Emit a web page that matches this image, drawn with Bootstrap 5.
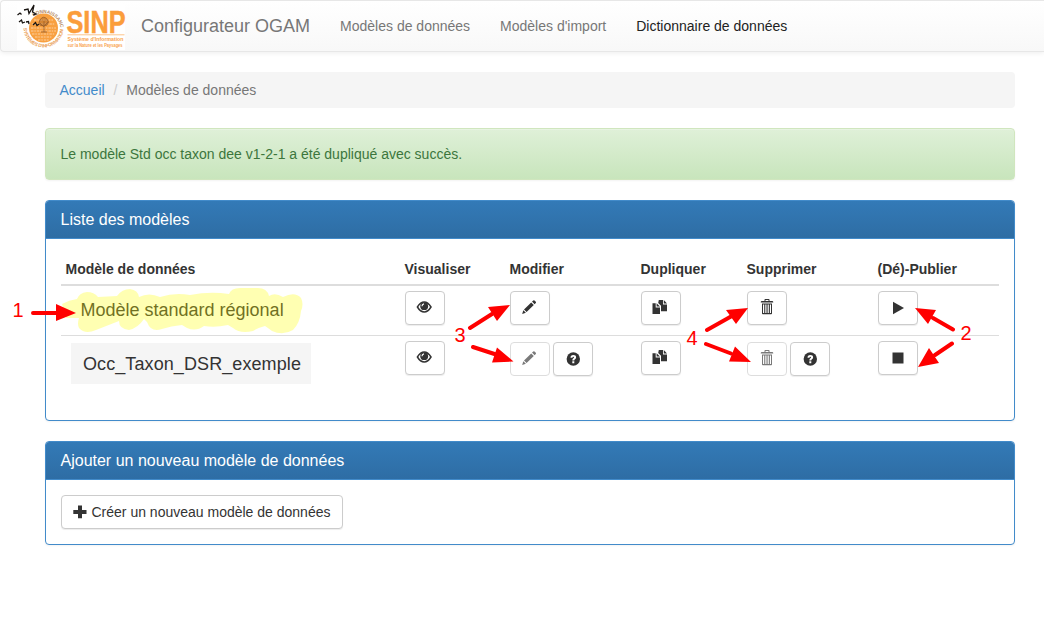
<!DOCTYPE html>
<html lang="fr">
<head>
<meta charset="utf-8">
<title>Configurateur OGAM</title>
<link href="https://cdn.jsdelivr.net/npm/bootstrap@5.3.0/dist/css/bootstrap.min.css" rel="stylesheet">
<style>
body{font-family:"Liberation Sans",Arial,sans-serif;font-size:14px;line-height:20px;color:#333;height:635px;overflow:hidden}
.topbar{height:52px;padding:0 0 0 16px;background:linear-gradient(#fff,#f8f8f8);border:1px solid #e7e7e7;border-right:0;border-radius:4px 0 0 4px;box-shadow:inset 0 1px 0 rgba(255,255,255,.15),0 1px 5px rgba(0,0,0,.075)}
.topbar .navbar-brand{font-size:18px;line-height:20px;color:#777;padding:0;margin:0 15px 0 14px}
.topbar .nav-link{padding:15px;color:#777;line-height:20px}
.topbar .nav-link.dico{color:#222}
.page-box{width:970px;margin:20px 0 0 45px}
.crumbs{height:36px;padding:8px 14.5px;background:#f5f5f5;border-radius:4px;margin-bottom:20px}
.crumbs a{color:#428bca;text-decoration:none}
.crumbs .breadcrumb-item{color:#777}
.crumbs .breadcrumb-item+.breadcrumb-item{padding-left:0}
.crumbs .breadcrumb-item+.breadcrumb-item::before{color:#ccc;padding:0 8.900px}
.notice{height:52px;padding:15px 14.5px;margin-bottom:20px;color:#3c763d;background:linear-gradient(#dff0d8,#c8e5bc);border:1px solid #d0e6be;border-radius:4px;box-shadow:inset 0 1px 0 rgba(255,255,255,.25),0 1px 2px rgba(0,0,0,.05)}
.panel{border:1px solid #428bca;border-radius:4px;margin-bottom:20px;box-shadow:0 1px 2px rgba(0,0,0,.05)}
.panel .card-header{height:38px;padding:9px 14.5px 8px;font-size:16px;line-height:20px;color:#fff;background:linear-gradient(#337ab7,#2e6da4);border-bottom:1px solid #428bca;border-radius:3px 3px 0 0}
.panel .card-body{padding:15px}
.models .card-body{padding-top:14px}
.models{height:221px}
.creation{height:104px}
.models table{table-layout:fixed;width:938px;margin:0;color:#333}
.models th{padding:5px 4.5px;height:32px;border-bottom:2px solid #ddd;line-height:20px}
.models td{padding:5px;height:50px;border:0;vertical-align:top}
.models tbody tr+tr td{border-top:1px solid #ddd}
.bt{display:inline-flex;align-items:center;justify-content:center;width:40px;height:34px;padding:0;border:1px solid #ccc;border-radius:4px;background:#fff;color:#333;font-size:14px;box-shadow:inset 0 1px 0 rgba(255,255,255,.15),0 1px 1px rgba(0,0,0,.075)}
.bt:disabled{opacity:.65;background:#fff;color:#333;border-color:#ccc;box-shadow:none}
.bt svg{display:block;fill:currentColor}
.bt.raised{padding:0 2px 2px 0}
.bt.lifted{padding-bottom:2px}
.bt.wide{width:282px;gap:4.500px;justify-content:flex-start;padding-left:11px}
.name1{font-size:18px;padding:9px 0 0 14.500px}
.name2{font-size:18px;letter-spacing:.09px;line-height:42px;width:240px;height:41px;margin:2px 0 0 5px;padding-left:12px;background:#f5f5f5}
.lowered{padding-top:1px}
.second{margin-left:3px}
.notes{position:absolute;left:0;top:0;pointer-events:none}
.notes text{font:20px "Liberation Sans",Arial,sans-serif;fill:red}
</style>
</head>
<body>
<svg width="0" height="0" class="position-absolute">
<defs>
<symbol id="eye" viewBox="0 0 16 14"><path d="M1.400 7Q4.500 2 8.200 2T15 7Q12 12 8.200 12T1.400 7Z" fill="none" stroke="currentColor" stroke-width="1.500"/><circle cx="8.200" cy="6.200" r="3.900"/><path d="M6 6.200Q6 4.200 8 3.800" fill="none" stroke="#fff" stroke-width="1.200"/></symbol>
<symbol id="pencil" viewBox="0 0 16 16"><path d="M1.200 15 2.300 11.200 4.900 13.800ZM3 10.400 10.200 3.400 12.800 6 5.600 13.100ZM11 2.600 12.300 1.400Q12.900.9 13.500 1.400L14.800 2.700Q15.300 3.300 14.800 3.900L13.600 5.200Z"/></symbol>
<symbol id="copy" viewBox="0 0 16 14"><path d="M.5 3.200H3.700V7.400H8V14H.5ZM4.600 3.200 8 6.500H4.600ZM6.800 0H11V4.400H15V11.300H9V5.800L6.200 3.100ZM11.800 0 15 3.500H11.800Z"/></symbol>
<symbol id="trash" viewBox="0 0 14 16"><path fill-rule="evenodd" d="M4.500 2V.8Q4.500 0 5.300 0H8.700Q9.500 0 9.500.8V2H12.500Q13.300 2 13.300 3.500H.7Q.7 2 1.500 2ZM5.500 2H8.500V1H5.500ZM2 4.500H12V14.500Q12 15.300 11.200 15.300H2.800Q2 15.300 2 14.500ZM3 5.500V14H4.200V5.500ZM5.300 5.500V14H6.500V5.500ZM7.600 5.500V14H8.800V5.500ZM9.900 5.500V14H11V5.500Z"/></symbol>
<symbol id="help" viewBox="0 0 14 14"><circle cx="7.300" cy="7" r="6.700"/><path d="M4.500 5.700Q4.500 3 7.300 3T10.100 5.400Q10.100 6.600 9 7.200Q8.300 7.600 8.300 8.400H6.300Q6.300 7 7.300 6.300Q8 5.900 8 5.400T7.300 4.800T6.500 5.700ZM6.300 9.300H8.300V11.200H6.300Z" fill="#fff"/></symbol>
</defs>
</svg>

<nav class="navbar topbar flex-nowrap align-items-center justify-content-start">
  <svg width="110" height="50" viewBox="17 1 110 50" role="img" aria-label="SINP" overflow="visible">
    <rect x="17" y="4" width="108" height="46" fill="#fff"/>
    <defs><path id="ring" d="M27.500 35.500A17 17 0 1 1 60.500 28"/><path id="ringlow" d="M23.500 27A20 20 0 0 0 63.500 28"/></defs>
    <circle cx="43.500" cy="28" r="14.500" fill="#f8a040"/>
    <g stroke="#fcd0a0" stroke-width="1" stroke-dasharray="2.500 .8 1.500 1"><path d="M34 20H53M32 24H55M31 28H56M31 31H56M32 34H55M35 37H52M38 40H49"/></g>
    <path d="M44 32V21M44 27 40 23M44 26 48 22M40 20Q43 15 47 19Q50 22 47 25Q44 27 40 25Q38 23 40 20M41 32H47" fill="#9b5b20" fill-opacity=".4" stroke="#a0622a" stroke-width=".9"/>
    <g font-family="Liberation Sans" font-weight="700" font-size="4.800"><text fill="#b58a62"><textPath href="#ring" startOffset="21" textLength="38">CONNAISSANCE</textPath></text><text fill="#eaa25a"><textPath href="#ringlow" startOffset="1" textLength="60">SYSTÈMES D'INFORMATION</textPath></text></g>
    <path d="M17.500 15 20 13 21.500 14.500M19 22 21.500 20 22.500 23 25 22M24 10 28 9 29 13.500 34 5 32.500 12 36 14 33 15M26 22 28.500 21.500 29 24M33 25 35.500 22.500 37 25.500 39 24" fill="none" stroke="#171310" stroke-width="1.300"/>
    <text x="66.500" y="33" textLength="59" lengthAdjust="spacingAndGlyphs" font-family="Liberation Sans" font-weight="700" font-size="31" fill="#fb9d3b" stroke="#fb9d3b" stroke-width=".5">SINP</text>
    <path d="M67.500 34.800H124.500" stroke="#fbb66d" stroke-width=".8"/>
    <g font-family="Liberation Sans" font-weight="700" fill="#f9a34d"><text x="67.500" y="41" textLength="56" lengthAdjust="spacingAndGlyphs" font-size="5.200">Système d'Information</text><text x="67.500" y="47" textLength="55" lengthAdjust="spacingAndGlyphs" font-size="4.500">sur la Nature et les Paysages</text></g>
  </svg>
  <a class="navbar-brand" href="#">Configurateur OGAM</a>
  <div class="nav flex-nowrap">
    <a class="nav-link" href="#">Modèles de données</a>
    <a class="nav-link" href="#">Modèles d'import</a>
    <a class="nav-link dico" href="#">Dictionnaire de données</a>
  </div>
</nav>

<main class="page-box">
  <ol class="breadcrumb crumbs">
    <li class="breadcrumb-item"><a href="#">Accueil</a></li>
    <li class="breadcrumb-item">Modèles de données</li>
  </ol>
  <div class="alert notice" role="alert">Le modèle Std occ taxon dee v1-2-1 a été dupliqué avec succès.</div>

  <section class="card panel models">
    <div class="card-header">Liste des modèles</div>
    <div class="card-body">
      <table>
        <colgroup><col style="width:339px"><col style="width:105px"><col style="width:131px"><col style="width:106px"><col style="width:131px"><col style="width:126px"></colgroup>
        <thead><tr><th>Modèle de données</th><th>Visualiser</th><th>Modifier</th><th>Dupliquer</th><th>Supprimer</th><th>(Dé)-Publier</th></tr></thead>
        <tbody>
          <tr>
            <td><div class="name1">Modèle standard régional</div></td>
            <td><button class="btn bt raised"><svg width="16" height="14"><use href="#eye"/></svg></button></td>
            <td><button class="btn bt raised"><svg width="16" height="16"><use href="#pencil"/></svg></button></td>
            <td><button class="btn bt raised"><svg width="16" height="14"><use href="#copy"/></svg></button></td>
            <td><button class="btn bt lifted"><svg width="14" height="16"><use href="#trash"/></svg></button></td>
            <td><button class="btn bt"><svg width="12" height="14"><path d="M1 .7 12 7 1 13.300Z"/></svg></button></td>
          </tr>
          <tr>
            <td><div class="name2">Occ_Taxon_DSR_exemple</div></td>
            <td><button class="btn bt raised"><svg width="16" height="14"><use href="#eye"/></svg></button></td>
            <td><div class="d-flex lowered"><button class="btn bt raised" disabled><svg width="16" height="16"><use href="#pencil"/></svg></button><button class="btn bt second"><svg width="14" height="14"><use href="#help"/></svg></button></div></td>
            <td><button class="btn bt raised"><svg width="16" height="14"><use href="#copy"/></svg></button></td>
            <td><div class="d-flex lowered"><button class="btn bt lifted" disabled><svg width="14" height="16"><use href="#trash"/></svg></button><button class="btn bt second"><svg width="14" height="14"><use href="#help"/></svg></button></div></td>
            <td><button class="btn bt"><svg width="12" height="12"><path d="M.5.500H11.500V11.500H.5Z"/></svg></button></td>
          </tr>
        </tbody>
      </table>
    </div>
  </section>

  <section class="card panel creation">
    <div class="card-header">Ajouter un nouveau modèle de données</div>
    <div class="card-body">
      <button class="btn bt wide"><svg width="14" height="14"><path d="M5 .5H9V5H13.500V9H9V13.300H5V9H.3V5H5Z"/></svg>Créer un nouveau modèle de données</button>
    </div>
  </section>
</main>

<svg class="notes" width="1044" height="635">
  <path fill="#ff0" fill-opacity=".3" d="M62 304Q69 300 77 299Q79 293 87 292Q94 292 98 297L117 296Q122 289 130 289Q138 290 139 297Q149 292 160 297Q175 292 190 295Q210 291 229 294Q231 288 240 288H258Q267 288 269 296Q275 292 283 297Q295 291 301 298Q304 304 301 311Q300 323 293 330Q283 336 272 331Q268 328 265 326Q257 328 253 331Q240 334 233 328L228 325Q215 328 204 326Q196 332 187 328L182 325Q171 326 162 329Q151 333 147 322L144 319Q138 328 129 330Q119 329 119 321L96 330Q85 335 79 328Q77 324 79 318L66 318Z"/>
  <g stroke="red" stroke-width="4" stroke-linecap="round"><path d="M33 313H58M470 328 492 314M473 347 496 354.500M707 330 731 316.500M706 344 731 353.500M933 318 953 329.500M935 355 952 343.500"/></g>
  <path fill="red" d="M56 304 76 313 56 321ZM510 305 488 307 497 321ZM513.500 361.500 497 347.500 492 362.500ZM748 308 726 310 736 324ZM751 362 735 346.500 729 361.500ZM915 308 936 310 928 324ZM918 367 929 348 939 363Z"/>
  <text x="12.500" y="317">1</text><text x="454.500" y="342">3</text><text x="686.500" y="345">4</text><text x="960.500" y="340">2</text>
</svg>
<script src="https://cdn.jsdelivr.net/npm/bootstrap@5.3.0/dist/js/bootstrap.bundle.min.js"></script>
</body>
</html>
